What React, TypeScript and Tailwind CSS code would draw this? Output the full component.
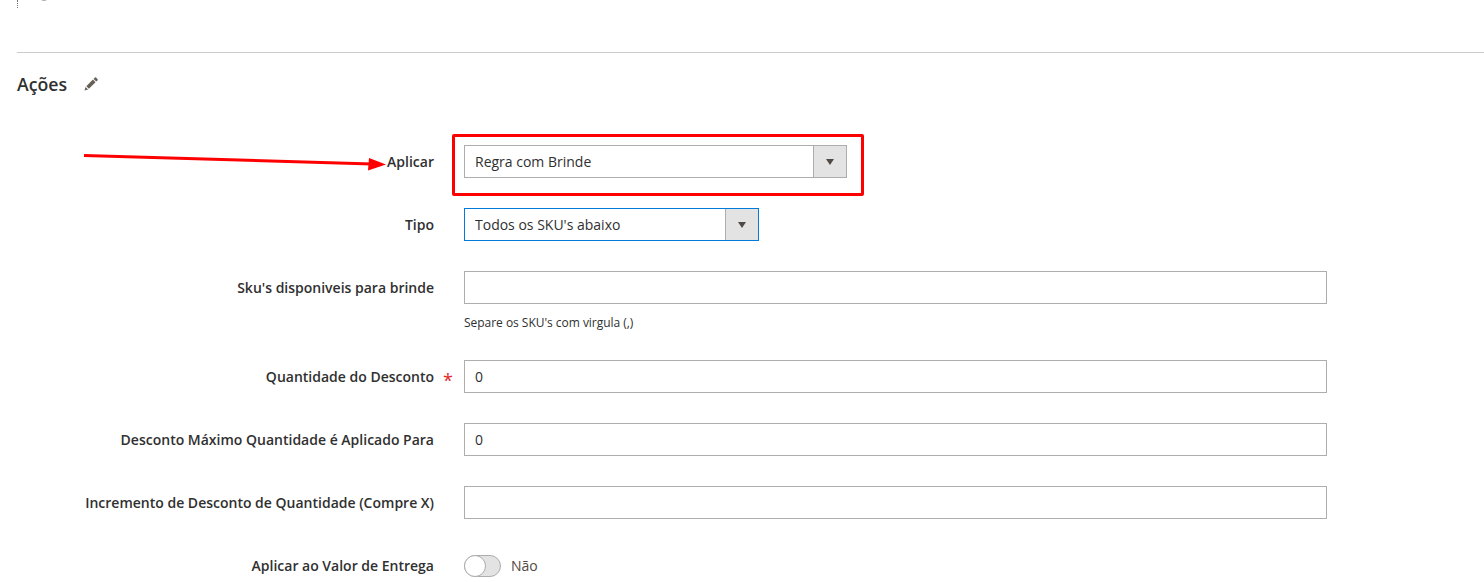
const labelCls = "w-[417px] shrink-0 text-right text-[14px] font-semibold text-[#303030] leading-[20px]";
const inputCls = "h-[33px] border border-[#adadad] bg-white px-[10px] flex items-center text-[14px] text-[#303030]";

function Row({ label, required, className, children }: { label: string; required?: boolean; className?: string; children: React.ReactNode }) {
  return (
    <div className={`flex items-center ${className ?? ""}`}>
      <div className={labelCls}>{label}</div>
      <div className="w-[30px] shrink-0 text-center text-[18px] leading-[20px] text-[#e22626]">
        {required ? <span className="relative left-[-1px] top-[3px]">*</span> : null}
      </div>
      {children}
    </div>
  );
}

function Select({ value, width, focus }: { value: string; width: string; focus?: boolean }) {
  return (
    <div className={`${width} h-[33px] flex items-stretch border bg-white text-[14px] text-[#303030] ${focus ? "border-[#007bdb]" : "border-[#adadad]"}`}>
      <div className="flex-1 flex items-center pl-[10px]">{value}</div>
      <div className="w-[33px] flex items-center justify-center bg-[#e3e3e3] border-l border-[#adadad]">
        <div className="w-0 h-0 border-l-[4px] border-r-[4px] border-t-[6px] border-l-transparent border-r-transparent border-t-[#514943]" />
      </div>
    </div>
  );
}

export default function App() {
  return (
    <div className="relative h-[582px] w-[1484px] overflow-hidden bg-white font-['Open_Sans',sans-serif]">
      {/* leftover of the section above */}
      <div className="absolute left-[17px] top-0 h-[8px] border-l border-dotted border-[#777]" />
      <div className="absolute left-[41px] top-[-4px] h-[5px] w-[6px] rounded-full bg-[#a9b8ae]" />

      <div className="pt-[52px] pl-[17px]">
        <div className="border-t border-[#cccccc]" />
        <div className="mt-[19px] flex items-center h-[24px]">
          <h2 className="text-[17.7px] font-semibold text-[#303030] leading-[24px]">Ações</h2>
          <svg className="ml-[16px]" width="16" height="16" viewBox="0 0 16 16">
            <path d="M1.5 14.5l1-3.6 2.6 2.6z M3.3 10.2l6.6-6.6 2.6 2.6-6.6 6.6z" fill="#676056" />
            <path d="M10.6 2.9l1.3-1.3a.8.8 0 0 1 1.1 0l1.5 1.5a.8.8 0 0 1 0 1.1l-1.3 1.3z" fill="#676056" />
          </svg>
        </div>

        <div className="mt-[49px]">
          <Row label="Aplicar">
            <Select value="Regra com Brinde" width="w-[383px]" />
          </Row>
          <Row label="Tipo" className="mt-[30px]">
            <Select value="Todos os SKU's abaixo" width="w-[295px]" focus />
          </Row>
          <Row label="Sku's disponiveis para brinde" className="mt-[30px]">
            <div className={`${inputCls} w-[863px]`} />
          </Row>
          <div className="ml-[447px] mt-[10px] h-[17px] text-[12px] tracking-[-0.03px] leading-[17px] text-[#303030]">Separe os SKU's com virgula (,)</div>
          <Row label="Quantidade do Desconto" required className="mt-[29px]">
            <div className={`${inputCls} w-[863px]`}>0</div>
          </Row>
          <Row label="Desconto Máximo Quantidade é Aplicado Para" className="mt-[30px]">
            <div className={`${inputCls} w-[863px]`}>0</div>
          </Row>
          <Row label="Incremento de Desconto de Quantidade (Compre X)" className="mt-[30px]">
            <div className={`${inputCls} w-[863px]`} />
          </Row>
          <Row label="Aplicar ao Valor de Entrega" className="mt-[36px]">
            <div className="relative h-[22px] w-[37px] rounded-full border border-[#adadad] bg-[#e3e3e3]">
              <div className="absolute left-[-1px] top-[-1px] h-[22px] w-[22px] rounded-full border border-[#adadad] bg-white" />
            </div>
            <span className="ml-[10px] text-[14px] leading-[20px] text-[#514943]">Não</span>
          </Row>
        </div>
      </div>

      {/* annotations on top of the screenshot */}
      <div className="absolute left-[452px] top-[134px] h-[62px] w-[412px] rounded-[2px] border-[3px] border-[#fe0000]" />
      <svg className="absolute left-0 top-0" width="400" height="180" viewBox="0 0 400 180">
        <line x1="84" y1="155.5" x2="372" y2="164" stroke="#fe0000" strokeWidth="3" />
        <path d="M369 158L386 164.5L368 170.5z" fill="#fe0000" />
      </svg>
    </div>
  );
}
